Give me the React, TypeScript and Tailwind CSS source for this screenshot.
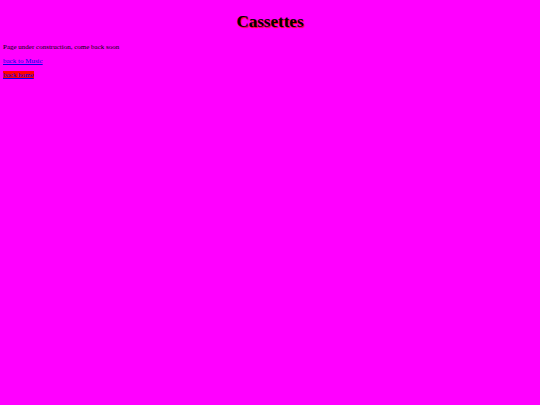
export default function App() {
  return (
    <div className="min-h-screen bg-[#ff00ff] px-[3px] pt-3 font-['Liberation_Serif',serif] text-[7px] leading-2 text-black">
      <h1 className="text-center text-[17px] leading-5 font-bold [text-shadow:1px_1px_1px_#ff0000]">
        Cassettes
      </h1>
      <div className="mt-[11px] flex flex-col items-start gap-[6px]">
        <p>Page under construction, come back soon</p>
        <a href="#music" className="text-[#0000ee] underline">back to Music</a>
        <a href="#home" className="bg-[#ff0000] text-[#0000ee] underline">back home</a>
      </div>
    </div>
  )
}
